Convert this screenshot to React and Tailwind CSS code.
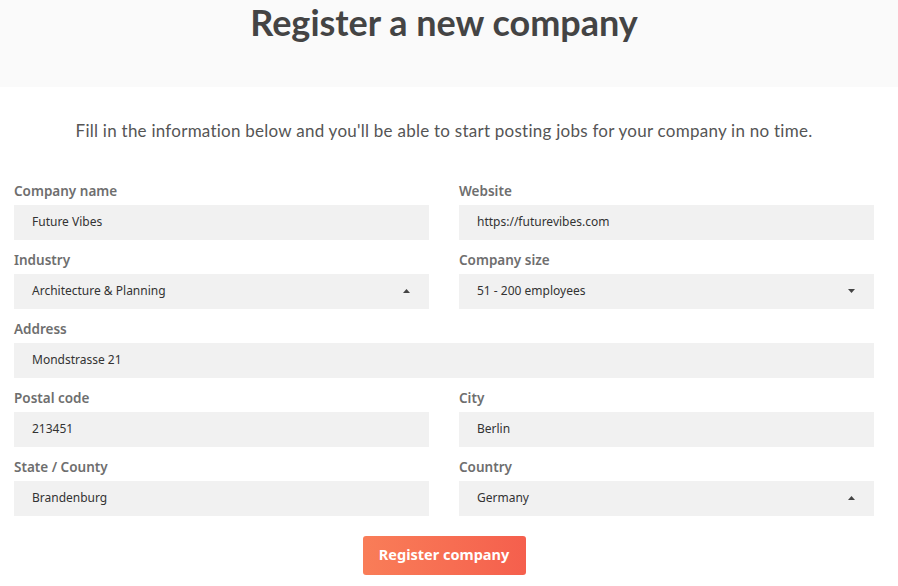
import React from 'react'

const fields = [
  [{ label: 'Company name', value: 'Future Vibes' }, { label: 'Website', value: 'https://futurevibes.com' }],
  [{ label: 'Industry', value: 'Architecture & Planning', caret: 'up' }, { label: 'Company size', value: '51 - 200 employees', caret: 'down' }],
  [{ label: 'Address', value: 'Mondstrasse 21', full: true }],
  [{ label: 'Postal code', value: '213451' }, { label: 'City', value: 'Berlin' }],
  [{ label: 'State / County', value: 'Brandenburg' }, { label: 'Country', value: 'Germany', caret: 'up' }],
]

function Caret({ dir }) {
  return (
    <svg width="7" height="4" viewBox="0 0 7 4" className="absolute right-[19px] top-1/2 -translate-y-1/2">
      {dir === 'up' ? <path d="M3.5 0L7 4H0Z" fill="#444" /> : <path d="M0 0H7L3.5 4Z" fill="#444" />}
    </svg>
  )
}

function Field({ label, value, caret, full }) {
  return (
    <div className={full ? 'col-span-2' : ''}>
      <div className="h-[34px] flex items-end pb-[6px] text-[13.5px] font-semibold text-[#6e6e6e] leading-none" style={{ fontFamily: '"Noto Sans", "Open Sans", sans-serif' }}>
        {label}
      </div>
      <div className="relative h-[35px] bg-[#f1f1f1] flex items-center pl-[18px] text-[12px] text-[#333]" style={{ fontFamily: '"Noto Sans", "Open Sans", sans-serif' }}>
        {value}
        {caret && <Caret dir={caret} />}
      </div>
    </div>
  )
}

export default function App() {
  return (
    <div className="w-[898px] h-[586px] bg-white overflow-hidden" style={{ fontFamily: 'Lato, sans-serif' }}>
      <div className="h-[87px] bg-[#fafafa] flex justify-center pl-[14px] pr-[24px]">
        <h1 className="mt-[-5px] text-[36px] font-bold text-[#444]">Register a new company</h1>
      </div>
      <p className="mt-[31px] pl-[14px] pr-[24px] text-center text-[17px] text-[#555] tracking-[0.25px]">
        Fill in the information below and you'll be able to start posting jobs for your company in no time.
      </p>
      <div className="mt-[27px] pl-[14px] pr-[24px] grid grid-cols-2 gap-x-[30px]">
        {fields.flat().map((f) => (
          <Field key={f.label} {...f} />
        ))}
      </div>
      <div className="flex justify-center mt-[20px] pl-[14px] pr-[24px]">
        <button className="w-[163px] h-[39px] rounded-[3px] bg-gradient-to-r from-[#f97d58] to-[#f55f4d] text-white text-[14.5px] font-bold" style={{ fontFamily: '"Noto Sans", "Open Sans", sans-serif' }}>
          Register company
        </button>
      </div>
    </div>
  )
}
